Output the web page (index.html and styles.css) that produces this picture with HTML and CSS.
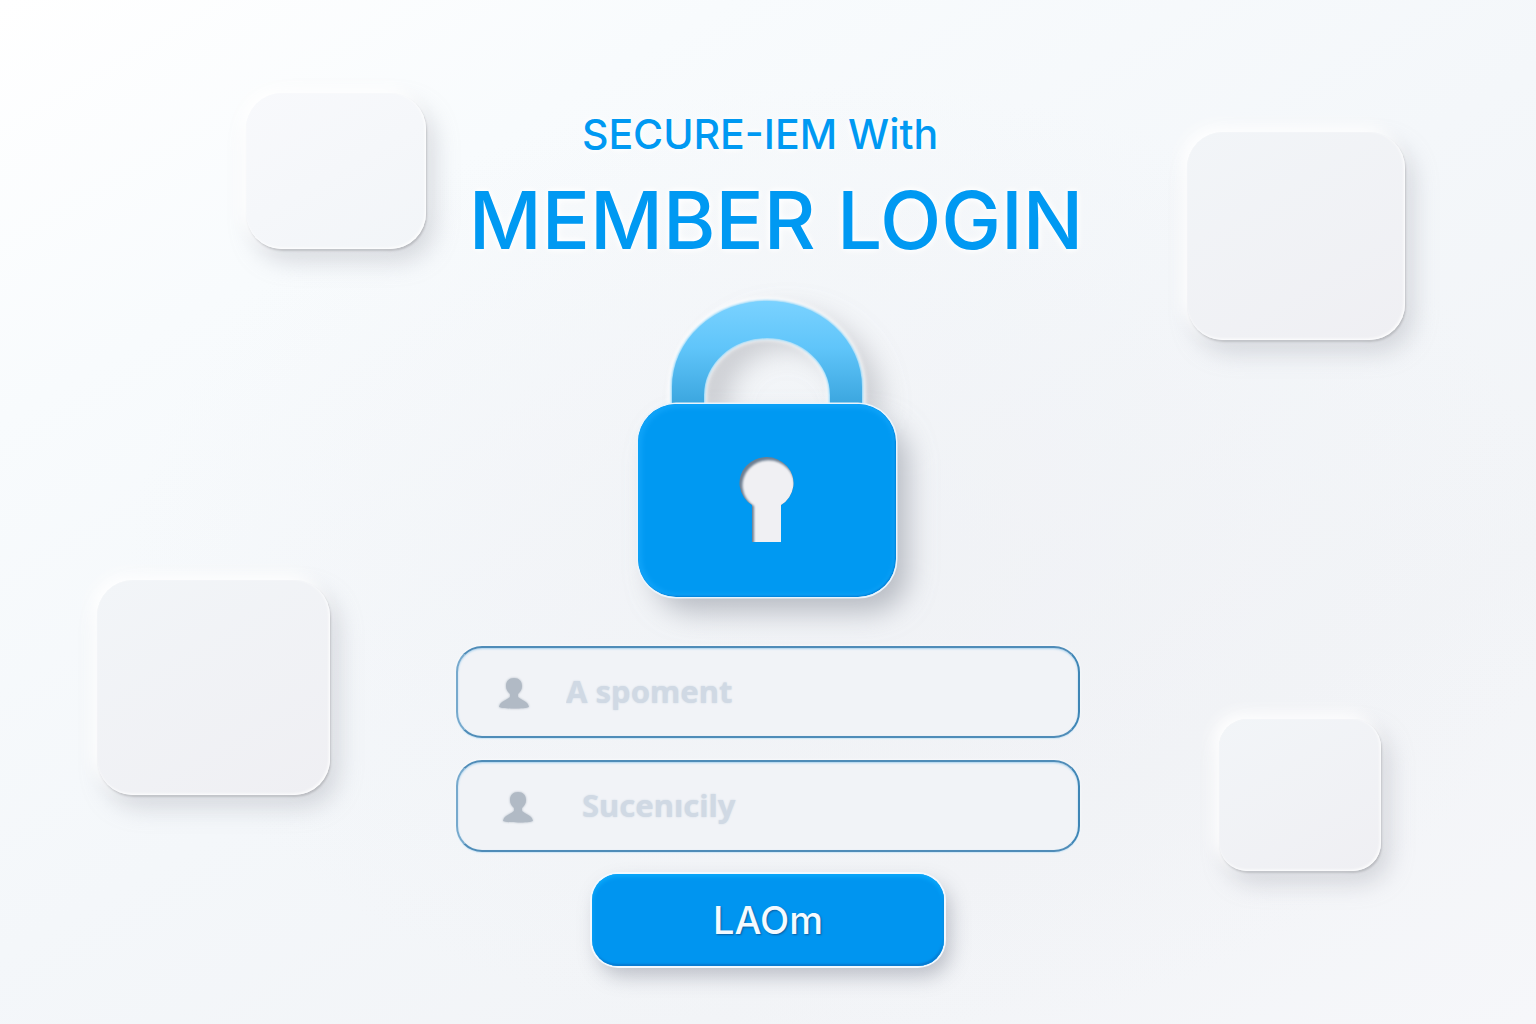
FILE: index.html
```html
<!DOCTYPE html>
<html lang="en">
<head>
<meta charset="utf-8">
<meta name="viewport" content="width=device-width, initial-scale=1">
<title>Member Login</title>
<link rel="stylesheet" href="styles.css">
</head>
<body>
<div class="scene">
  <span class="tile tile-nw" aria-hidden="true"></span>
  <span class="tile tile-ne" aria-hidden="true"></span>
  <span class="tile tile-sw" aria-hidden="true"></span>
  <span class="tile tile-se" aria-hidden="true"></span>

  <main class="login">
    <header class="heading">
      <p class="eyebrow">SECURE-IEM With</p>
      <h1 class="title">MEMBER LOGIN</h1>
    </header>

    <svg class="lock" viewBox="0 0 320 350" aria-hidden="true">
      <defs>
        <linearGradient id="shackle" x1="0" y1="0" x2="0" y2="1">
          <stop offset="0" stop-color="#7ad2ff"/>
          <stop offset="0.45" stop-color="#60c5fa"/>
          <stop offset="1" stop-color="#3ba6df"/>
        </linearGradient>
        <filter id="soft" x="-60%" y="-100%" width="220%" height="300%">
          <feGaussianBlur stdDeviation="14"/>
        </filter>
        <filter id="edge" x="-10%" y="-10%" width="120%" height="120%">
          <feGaussianBlur stdDeviation="2"/>
        </filter>
        <filter id="fine" x="-10%" y="-10%" width="120%" height="120%">
          <feGaussianBlur stdDeviation="1"/>
        </filter>
        <clipPath id="bodyClip"><rect x="30" y="114" width="258" height="193" rx="38"/></clipPath>
        <clipPath id="holeClip"><path d="M144 252V215A27 26 0 1 1 173 215V252Z"/></clipPath>
      </defs>
      <path d="M102 130V114A77 74 0 0 1 256 114V130" fill="none" stroke="#94969e" stroke-opacity="0.45" stroke-width="34" filter="url(#soft)"/>
      <rect x="46" y="132" width="254" height="190" rx="38" fill="#9a9ea8" fill-opacity="0.65" filter="url(#soft)"/>
      <path d="M63 114V97A96 87 0 0 1 255 97V114H222V105A63 57 0 0 0 96 105V114Z" fill="none" stroke="#fff" stroke-width="4" filter="url(#edge)"/>
      <path d="M64 114V97A95 86 0 0 1 254 97V114H222V105A63 57 0 0 0 96 105V114Z" fill="#5fbfee" stroke="#8ed6fb" stroke-width="2" filter="url(#fine)"/>
      <path d="M64 114V97A95 86 0 0 1 254 97V114H222V105A63 57 0 0 0 96 105V114Z" fill="url(#shackle)"/>
      <rect x="30" y="114" width="258" height="193" rx="38" fill="#0099f2" stroke="#e9f4fc" stroke-width="3"/>
      <g clip-path="url(#bodyClip)">
        <rect x="30" y="114" width="258" height="193" rx="38" fill="#0276ce"/>
        <rect x="28" y="112" width="259" height="194" rx="38" fill="#0aa2f8" filter="url(#fine)"/>
        <rect x="34" y="118" width="252" height="186" rx="36" fill="#0099f2" filter="url(#edge)"/>
      </g>
      <path d="M144 252V215A27 26 0 1 1 173 215V252Z" fill="#6d7f92"/>
      <g clip-path="url(#holeClip)">
        <path d="M146 256V216A26 25 0 1 1 175 216V256Z" fill="#f0f0f3" filter="url(#fine)"/>
      </g>
    </svg>

    <form class="form" action="#" method="post">
      <div class="field">
        <svg class="person" viewBox="0 0 32 34" aria-hidden="true">
          <path d="M16 3C21 3 24 6 24 11C24 15 22 17 20 19V22C23 25 30 26 31 32C27 34 5 34 1 32C2 26 9 25 12 22V19C10 17 8 15 8 11C8 6 11 3 16 3Z"/>
        </svg>
        <input class="input" type="text" name="account" placeholder="A spoment" aria-label="A spoment">
      </div>
      <div class="field field-inset">
        <svg class="person" viewBox="0 0 32 34" aria-hidden="true">
          <path d="M16 3C21 3 24 6 24 11C24 15 22 17 20 19V22C23 25 30 26 31 32C27 34 5 34 1 32C2 26 9 25 12 22V19C10 17 8 15 8 11C8 6 11 3 16 3Z"/>
        </svg>
        <input class="input" type="text" name="security" placeholder="Sucenıcily" aria-label="Sucenıcily">
      </div>
      <button class="submit" type="submit">LAOm</button>
    </form>
  </main>
</div>
</body>
</html>
```
FILE: styles.css
```css
* { box-sizing: border-box; }

body {
  margin: 0;
  font-family: Inter, "Liberation Sans", sans-serif;
  color: #0099f2;
}

.scene {
  position: relative;
  min-height: 100vh;
  padding: 108px 24px 56px;
  overflow: hidden;
  background:
    radial-gradient(ellipse at 55% 55%, rgba(238, 239, 243, 0.6), rgba(238, 239, 243, 0) 60%),
    linear-gradient(150deg, #fff 0%, #f8fbfd 22%, #f4f7fa 50%, #f2f4f7 75%, #f6f7fa 100%);
}

.login {
  position: relative;
  display: flex;
  flex-direction: column;
  align-items: center;
  max-width: 624px;
  margin: 0 auto;
}

.heading {
  text-align: center;
  white-space: nowrap;
  text-shadow: 0 0 6px #fff, 0 0 10px #fff;
}

.eyebrow {
  margin: 0;
  padding-right: 16px;
  font-size: 41px;
  line-height: 52px;
  font-weight: 500;
}

.title {
  margin: 20px 0 0;
  padding-left: 16px;
  font-size: 80px;
  line-height: 80px;
  font-weight: 500;
}

.lock {
  display: block;
  width: 320px;
  height: 350px;
  margin-top: 30px;
  overflow: visible;
}

.form {
  display: flex;
  flex-direction: column;
  align-items: center;
  align-self: stretch;
  gap: 22px;
  margin-top: 6px;
}

.field {
  display: flex;
  align-items: center;
  gap: 36px;
  width: 100%;
  height: 92px;
  padding: 0 40px;
  border: 2px solid #4f8cb8;
  border-left-color: #76a9cd;
  border-right-color: #3f86b6;
  border-radius: 26px;
  background: #f1f3f7;
  box-shadow: 0 0 3px #fff, 0 1px 1px #b5d9f2, inset 0 1px 2px #a9d2ef;
}

.field-inset { padding-left: 44px; gap: 48px; }

.person {
  flex: none;
  width: 32px;
  height: 34px;
  fill: #b1bac5;
  filter: drop-shadow(0 0 1px #b1bac5);
}

.input {
  flex: 1;
  min-width: 0;
  height: 48px;
  padding: 0 0 2px;
  border: 0;
  outline: 0;
  background: transparent;
  color: #8fa0b5;
  font: 700 31px/44px "Noto Sans", "Open Sans", sans-serif;
}

.input::placeholder {
  color: #d0d9e4;
  opacity: 1;
  text-shadow: 0 0 2px #d0d9e4;
}

.submit {
  width: 352px;
  height: 92px;
  border: 0;
  border-radius: 26px;
  background: #0095f0;
  color: #f4faff;
  font: 500 38px/48px Inter, sans-serif;
  text-shadow: 1px 1px 2px #0a5da0;
  box-shadow:
    0 0 0 2px #f2f9ff,
    6px 10px 20px rgba(120, 125, 140, 0.45),
    inset 0 3px 4px #0aa9fb,
    inset -1px -2px 2px #0878ce;
}

.tile {
  position: absolute;
  border-radius: 36px;
  background: linear-gradient(150deg, #f2f5f8, #efeff3);
  box-shadow:
    -6px -6px 16px #fff,
    1px 2px 2px #b4b6bb,
    8px 12px 24px rgba(150, 152, 162, 0.35),
    inset -1px -1px 3px #fff;
}

.tile-nw { top: 93px; left: 16%; width: 180px; height: 156px; background: linear-gradient(150deg, #f8f9fc, #f2f5f8); }
.tile-ne { top: 132px; right: 8.5%; width: 218px; height: 208px; }
.tile-sw { top: 580px; left: 6.3%; width: 233px; height: 215px; }
.tile-se { top: 719px; right: 10.1%; width: 162px; height: 152px; border-radius: 28px; }
```
